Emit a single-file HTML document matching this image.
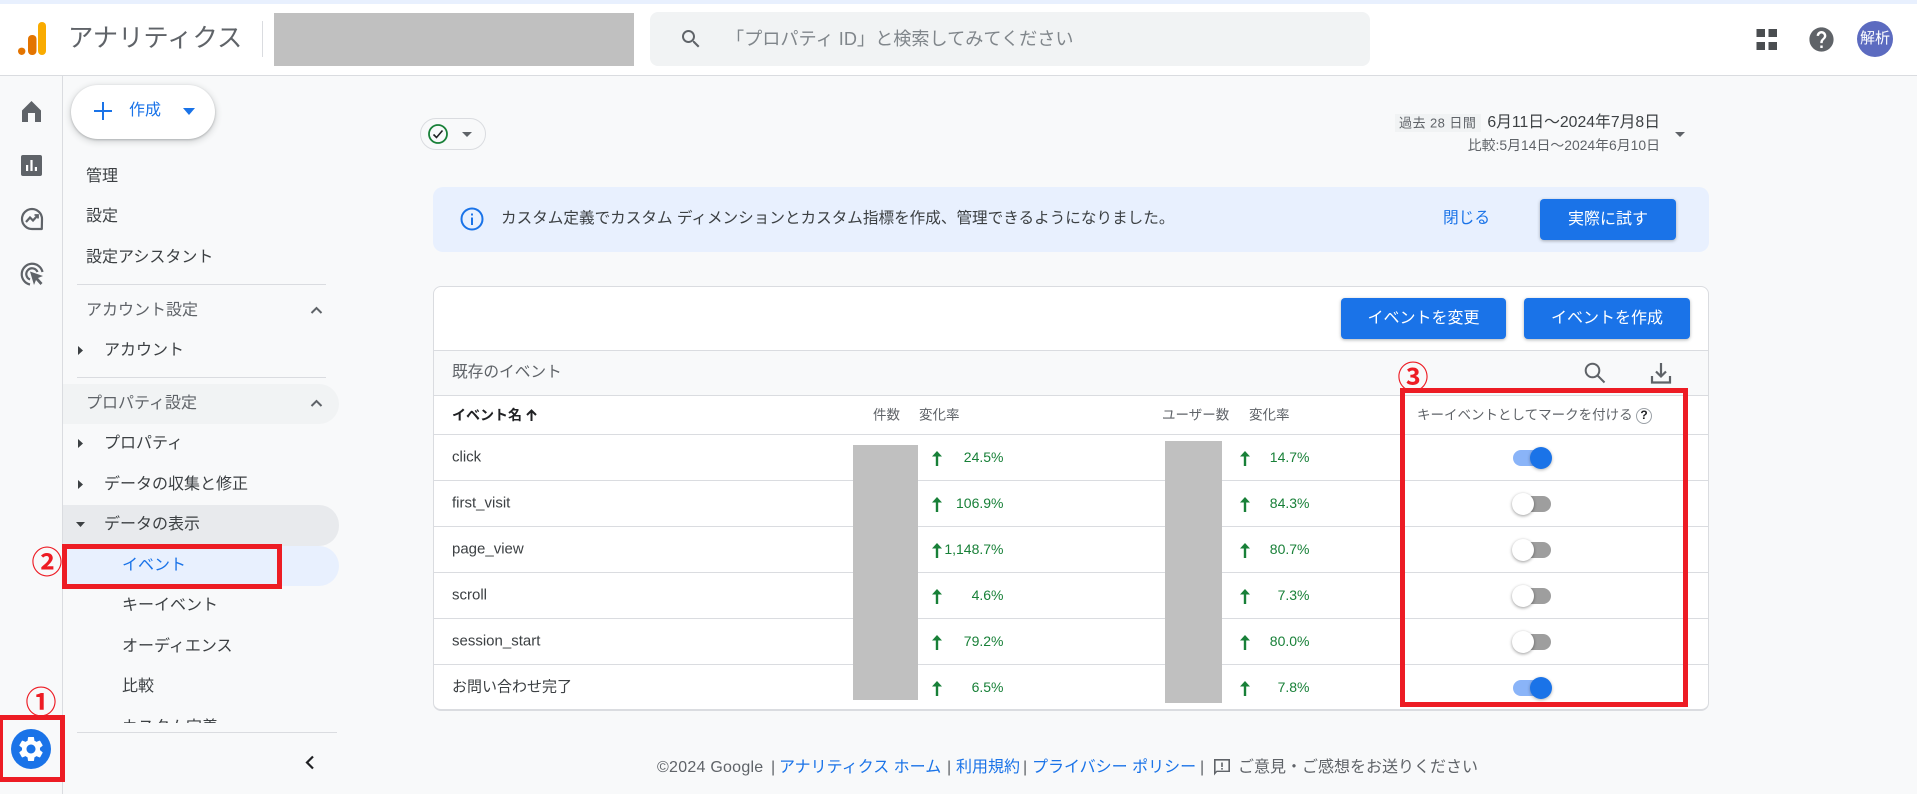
<!DOCTYPE html>
<html lang="ja"><head><meta charset="utf-8"><title>アナリティクス</title>
<style>
html,body{margin:0;padding:0;width:1917px;height:794px;overflow:hidden;background:#f8f9fa}
body{position:relative;font-family:"Liberation Sans","Noto Sans CJK JP",sans-serif;color:#3c4043}
.t{position:absolute;white-space:nowrap;line-height:1;transform:translateY(-50%);font-size:16px}
.b{position:absolute;box-sizing:border-box}
svg{position:absolute;display:block}
.g{color:#5f6368}.bl{color:#1a73e8}
.v{font-size:14px;color:#188038;right:913.5px}
.v2{font-size:14px;color:#188038;right:607.5px}
.row{font-size:15px;left:452px;color:#3c4043}
.l{position:absolute;left:434px;width:1274px;height:1px;background:#dadce0}
.btn{position:absolute;box-sizing:border-box;background:#1a73e8;color:#fff;border-radius:4px;font-size:16px;line-height:1;padding-bottom:0;display:flex;align-items:center;justify-content:center;box-shadow:0 1px 3px rgba(60,64,67,.4)}
.tr{position:absolute;width:38px;height:16px;border-radius:8px;left:1513px}
.th{position:absolute;width:22px;height:22px;border-radius:50%}
.on{background:#8ab4f8}.off{background:#9e9e9e}
.thon{background:#1a73e8;left:1530px;box-shadow:0 1px 3px rgba(0,0,0,.3)}
.thoff{background:#fff;left:1512px;box-shadow:0 1px 3px rgba(0,0,0,.4)}
.red{position:absolute;box-sizing:border-box;border:5px solid #ed1c24}
.num{position:absolute;color:#ed1c24;font-size:31px;font-weight:bold;line-height:1;transform:translate(-50%,-50%);font-family:"Noto Sans CJK JP",sans-serif}
</style></head><body>

<!-- top strip + header -->
<div class="b" style="left:0;top:0;width:1917px;height:4px;background:#e8f0fe"></div>
<div class="b" style="left:0;top:4px;width:1917px;height:72px;background:#fff;border-bottom:1px solid #dadce0"></div>

<svg style="left:18px;top:22px" width="28" height="33" viewBox="0 0 28 33">
<rect x="20" y="0" width="8" height="33" rx="4" fill="#f9ab00"/>
<rect x="10" y="13" width="8.500" height="20" rx="4" fill="#e37400"/>
<circle cx="3.700" cy="29.300" r="3.700" fill="#e37400"/></svg>
<div class="t g" style="left:68px;top:39px;font-size:25.300px">アナリティクス</div>
<div class="b" style="left:262px;top:21px;width:1px;height:36px;background:#dadce0"></div>
<div class="b" style="left:274px;top:13px;width:360px;height:53px;background:#c0c0c0"></div>
<div class="b" style="left:650px;top:12px;width:720px;height:54px;background:#f1f3f4;border-radius:8px"></div>
<svg style="left:679px;top:27px" width="24" height="24" viewBox="0 0 24 24"><path fill="#5f6368" d="M15.500 14h-.79l-.28-.27C15.410 12.590 16 11.110 16 9.500 16 5.910 13.090 3 9.500 3S3 5.910 3 9.500 5.910 16 9.500 16c1.610 0 3.090-.59 4.230-1.570l.27.28v.79l5 4.990L20.490 19l-4.990-5zm-6 0C7.010 14 5 11.990 5 9.500S7.010 5 9.500 5 14 7.010 14 9.500 11.990 14 9.500 14z"/></svg>
<div class="t" style="left:726px;top:39px;font-size:18.150px;color:#80868b">「プロパティ ID」と検索してみてください</div>

<svg style="left:1756px;top:29px" width="22" height="21" viewBox="0 0 22 21" fill="#4a4d50"><rect x=".5" width="8.500" height="8"/><rect x="12.500" width="8.500" height="8"/><rect x=".5" y="13" width="8.500" height="8"/><rect x="12.500" y="13" width="8.500" height="8"/></svg>
<svg style="left:1807px;top:24.500px" width="29" height="29" viewBox="0 0 24 24"><path fill="#5f6368" d="M12 2C6.480 2 2 6.480 2 12s4.480 10 10 10 10-4.480 10-10S17.520 2 12 2zm1 17h-2v-2h2v2zm2.070-7.750l-.9.92C13.450 12.900 13 13.500 13 15h-2v-.5c0-1.100.45-2.100 1.170-2.830l1.240-1.260c.37-.36.59-.86.59-1.410 0-1.100-.9-2-2-2s-2 .9-2 2H8c0-2.210 1.790-4 4-4s4 1.790 4 4c0 .88-.36 1.680-.93 2.250z"/></svg>
<div class="b" style="left:1857px;top:21px;width:36px;height:36px;border-radius:50%;background:#5c6bc0;color:#fff;font-size:15px;line-height:1;padding-bottom:2px;display:flex;align-items:center;justify-content:center">解析</div>

<!-- left rail -->
<div class="b" style="left:62px;top:76px;width:1px;height:718px;background:#dadce0"></div>
<svg style="left:22px;top:101px" width="19" height="21" viewBox="0 0 19 21"><path fill="#5f6368" d="M9.500 0L0 9.500V21h6v-9h7v9h6V9.500z"/></svg>
<svg style="left:21px;top:155px" width="21" height="21" viewBox="0 0 21 21"><rect width="21" height="21" rx="2" fill="#5f6368"/><path fill="#fff" d="M5 10h2.200v6H5zM9.400 5h2.200v11H9.400zM13.800 12h2.200v4h-2.200z"/></svg>
<svg style="left:20px;top:207px" width="24" height="24" viewBox="0 0 24 24" fill="none" stroke="#5f6368"><path d="M21.800 22H12A10 10 0 1 1 22 12z" stroke-width="2.200" stroke-linejoin="round"/><path d="M6 15l4-4.500 3 3L18 8" stroke-width="2.200"/><path d="M14.500 8H18v3.500" stroke-width="1.800"/></svg>
<svg style="left:20px;top:262px" width="24" height="24" viewBox="0 0 24 24" fill="none" stroke="#5f6368" stroke-width="2.200"><path d="M10 22.500A10.500 10.500 0 1 1 22.500 10"/><path d="M10 17.500A5.800 5.800 0 1 1 17.500 10"/><path fill="#5f6368" stroke="none" d="M10 9.500l13 4.500-5 2 4.500 5-2 2-4.500-5-2 5z"/></svg>

<!-- Create -->
<div class="b" style="left:71px;top:85px;width:144px;height:54px;border-radius:27px;background:#fff;box-shadow:0 2px 6px 2px rgba(60,64,67,.15),0 1px 2px rgba(60,64,67,.3)"></div>
<svg style="left:93px;top:101px" width="20" height="20" viewBox="0 0 20 20"><path fill="#1a73e8" d="M9 1h2v8h8v2h-8v8H9v-8H1V9h8z"/></svg>
<div class="t bl" style="left:129px;top:110.500px">作成</div>
<svg style="left:183px;top:108px" width="12" height="7" viewBox="0 0 12 7"><path fill="#1a73e8" d="M0 0h12L6 7z"/></svg>

<!-- nav -->
<div class="t" style="left:86px;top:177px">管理</div>
<div class="t" style="left:86px;top:217px">設定</div>
<div class="t" style="left:86px;top:258px">設定アシスタント</div>
<div class="b" style="left:77px;top:284px;width:249px;height:1px;background:#dadce0"></div>
<div class="t g" style="left:86px;top:311px">アカウント設定</div>
<svg style="left:310px;top:306px" width="13" height="8" viewBox="0 0 13 8" fill="none" stroke="#5f6368" stroke-width="2"><path d="M1.500 7l5-5 5 5"/></svg>
<svg style="left:78px;top:346px" width="5" height="9" viewBox="0 0 5 9"><path fill="#3c4043" d="M0 0l5 4.500L0 9z"/></svg>
<div class="t" style="left:104px;top:351px">アカウント</div>
<div class="b" style="left:77px;top:377px;width:249px;height:1px;background:#dadce0"></div>

<div class="b" style="left:63px;top:384px;width:276px;height:40px;background:#f1f3f4;border-radius:0 20px 20px 0"></div>
<div class="t g" style="left:86px;top:404px">プロパティ設定</div>
<svg style="left:310px;top:399px" width="13" height="8" viewBox="0 0 13 8" fill="none" stroke="#5f6368" stroke-width="2"><path d="M1.500 7l5-5 5 5"/></svg>
<svg style="left:78px;top:439px" width="5" height="9" viewBox="0 0 5 9"><path fill="#3c4043" d="M0 0l5 4.500L0 9z"/></svg>
<div class="t" style="left:104px;top:444px">プロパティ</div>
<svg style="left:78px;top:480px" width="5" height="9" viewBox="0 0 5 9"><path fill="#3c4043" d="M0 0l5 4.500L0 9z"/></svg>
<div class="t" style="left:104px;top:485px">データの収集と修正</div>
<div class="b" style="left:63px;top:505px;width:276px;height:41px;background:#e8eaed;border-radius:0 20px 20px 0"></div>
<svg style="left:76px;top:522px" width="9" height="5" viewBox="0 0 9 5"><path fill="#3c4043" d="M0 0h9L4.500 5z"/></svg>
<div class="t" style="left:104px;top:525px">データの表示</div>
<div class="b" style="left:63px;top:546px;width:276px;height:40px;background:#e8f0fe;border-radius:0 20px 20px 0"></div>
<div class="t bl" style="left:122px;top:566px">イベント</div>
<div class="t" style="left:122px;top:606px">キーイベント</div>
<div class="t" style="left:122px;top:647px">オーディエンス</div>
<div class="t" style="left:122px;top:687px">比較</div>
<div class="b" style="left:63px;top:712px;width:270px;height:11px;overflow:hidden"><div class="t" style="left:59px;top:16px">カスタム定義</div></div>
<div class="b" style="left:77px;top:732px;width:260px;height:1px;background:#dadce0"></div>
<svg style="left:305px;top:755px" width="10" height="15" viewBox="0 0 10 15" fill="none" stroke="#202124" stroke-width="2.200"><path d="M8 1.500L2 7.500l6 6"/></svg>
<div class="b" style="left:11px;top:729px;width:40px;height:40px;border-radius:50%;background:#1a73e8"></div>
<svg style="left:16px;top:734px" width="30" height="30" viewBox="0 0 24 24"><path fill="#fff" d="M19.140 12.940c.04-.3.06-.61.06-.94 0-.32-.02-.64-.07-.94l2.030-1.580c.18-.14.23-.41.12-.61l-1.920-3.320c-.12-.22-.37-.29-.59-.22l-2.390.96c-.5-.38-1.030-.7-1.620-.94l-.36-2.540c-.04-.24-.24-.41-.48-.41h-3.840c-.24 0-.43.17-.47.41l-.36 2.540c-.59.24-1.130.57-1.620.94l-2.390-.96c-.22-.08-.47 0-.59.22L2.740 8.870c-.12.21-.08.47.12.61l2.030 1.580c-.05.3-.09.63-.09.94s.02.64.07.94l-2.030 1.580c-.18.14-.23.41-.12.61l1.920 3.320c.12.22.37.29.59.22l2.390-.96c.5.38 1.030.7 1.620.94l.36 2.540c.05.24.24.41.48.41h3.840c.24 0 .44-.17.47-.41l.36-2.540c.59-.24 1.130-.56 1.620-.94l2.390.96c.22.08.47 0 .59-.22l1.920-3.320c.12-.22.07-.47-.12-.61l-2.010-1.580zM12 15.600c-1.980 0-3.600-1.620-3.600-3.600s1.620-3.600 3.600-3.600 3.600 1.620 3.600 3.600-1.620 3.600-3.600 3.600z"/></svg>

<!-- status pill -->
<div class="b" style="left:420px;top:118px;width:66px;height:32px;border:1px solid #dadce0;border-radius:16px"></div>
<svg style="left:428px;top:124px" width="20" height="20" viewBox="0 0 20 20" fill="none" stroke="#188038"><circle cx="10" cy="10" r="9" stroke-width="1.800"/><path d="M5.500 10.500l3 3L14.500 6.500" stroke="#202124" stroke-width="1.600"/></svg>
<svg style="left:462px;top:132px" width="10" height="5" viewBox="0 0 10 5"><path fill="#5f6368" d="M0 0h10L5 5z"/></svg>

<!-- date -->
<div class="b" style="left:1395px;top:114px;width:86px;height:18px;background:#f1f3f4"></div>
<div class="t" style="left:1399px;top:123px;font-size:13px;color:#5f6368;letter-spacing:.45px">過去 28 日間</div>
<div class="t" style="right:257px;top:122.500px;font-size:15.800px;color:#3c4043">6月11日〜2024年7月8日</div>
<div class="t g" style="right:257px;top:145.500px;font-size:13.900px">比較:5月14日〜2024年6月10日</div>
<svg style="left:1675px;top:132px" width="10" height="5" viewBox="0 0 10 5"><path fill="#5f6368" d="M0 0h10L5 5z"/></svg>

<!-- banner -->
<div class="b" style="left:433px;top:187px;width:1276px;height:65px;background:#e8f0fe;border-radius:10px"></div>
<svg style="left:460px;top:207px" width="24" height="24" viewBox="0 0 24 24"><circle cx="12" cy="12" r="10.500" fill="none" stroke="#1a73e8" stroke-width="2"/><path fill="#1a73e8" d="M11 10.500h2V18h-2zM11 6.500h2v2h-2z"/></svg>
<div class="t" style="left:501px;top:218.500px;font-size:15.600px">カスタム定義でカスタム ディメンションとカスタム指標を作成、管理できるようになりました。</div>
<div class="t bl" style="left:1443px;top:218.500px;font-size:15.700px">閉じる</div>
<div class="btn" style="left:1540px;top:199px;width:136px;height:41px">実際に試す</div>

<!-- card -->
<div class="b" style="left:433px;top:286px;width:1276px;height:425px;background:#fff;border:1px solid #dadce0;border-bottom:2px solid #dadce0;border-radius:8px"></div>
<div class="btn" style="left:1341px;top:298px;width:165px;height:41px">イベントを変更</div>
<div class="btn" style="left:1524px;top:298px;width:166px;height:41px">イベントを作成</div>
<div class="b" style="left:434px;top:351px;width:1274px;height:44px;background:#f8f9fa"></div>
<div class="l" style="top:350px"></div>
<div class="l" style="top:395px"></div>
<div class="t" style="left:452px;top:373px;font-size:15.700px;color:#5f6368">既存のイベント</div>
<svg style="left:1584px;top:362px" width="22" height="22" viewBox="0 0 22 22" fill="none" stroke="#5f6368" stroke-width="2"><circle cx="8.500" cy="8.500" r="6.800"/><path d="M13.500 13.500l7 7"/></svg>
<svg style="left:1650px;top:362px" width="22" height="22" viewBox="0 0 22 22" fill="none" stroke="#5f6368" stroke-width="2.200"><path d="M11 1v13M6 9.500l5 5 5-5M2 14v6.500h18V14"/></svg>

<!-- table head -->
<div class="t" style="left:452px;top:415px;font-size:14px;font-weight:bold;color:#202124">イベント名</div>
<svg style="left:526px;top:409px" width="11" height="12" viewBox="0 0 11 12" fill="none" stroke="#202124" stroke-width="2"><path d="M5.500 12V1.500M1 6l4.500-4.500L10 6"/></svg>
<div class="t g" style="left:873px;top:415px;font-size:13.500px">件数</div>
<div class="t g" style="left:919px;top:415px;font-size:13.500px">変化率</div>
<div class="t g" style="left:1162px;top:415px;font-size:13.500px">ユーザー数</div>
<div class="t g" style="left:1249px;top:415px;font-size:13.500px">変化率</div>
<div class="t g" style="left:1417px;top:415px;font-size:13.500px">キーイベントとしてマークを付ける</div>
<div class="b" style="left:1636px;top:408px;width:16px;height:16px;border:1.500px solid #9aa0a6;border-radius:50%;font-size:12px;font-weight:bold;color:#202124;text-align:center;line-height:13px">?</div>

<div class="l" style="top:434px"></div><div class="l" style="top:480px"></div><div class="l" style="top:526px"></div><div class="l" style="top:572px"></div><div class="l" style="top:618px"></div><div class="l" style="top:664px"></div>

<div class="t row" style="top:457px">click</div>
<div class="t row" style="top:503px">first_visit</div>
<div class="t row" style="top:549px">page_view</div>
<div class="t row" style="top:595px">scroll</div>
<div class="t row" style="top:641px">session_start</div>
<div class="t row" style="top:687px">お問い合わせ完了</div>

<div class="b" style="left:853px;top:445px;width:65px;height:255px;background:#c0c0c0"></div>
<div class="b" style="left:1165px;top:441px;width:57px;height:262px;background:#c0c0c0"></div>

<svg style="left:932px;top:451px" width="10" height="15" viewBox="0 0 10 15"><path fill="#188038" d="M5 0l5 5.500H6.200V15H3.800V5.500H0z"/></svg>
<svg style="left:932px;top:497px" width="10" height="15" viewBox="0 0 10 15"><path fill="#188038" d="M5 0l5 5.500H6.200V15H3.800V5.500H0z"/></svg>
<svg style="left:932px;top:543px" width="10" height="15" viewBox="0 0 10 15"><path fill="#188038" d="M5 0l5 5.500H6.200V15H3.800V5.500H0z"/></svg>
<svg style="left:932px;top:589px" width="10" height="15" viewBox="0 0 10 15"><path fill="#188038" d="M5 0l5 5.500H6.200V15H3.800V5.500H0z"/></svg>
<svg style="left:932px;top:635px" width="10" height="15" viewBox="0 0 10 15"><path fill="#188038" d="M5 0l5 5.500H6.200V15H3.800V5.500H0z"/></svg>
<svg style="left:932px;top:681px" width="10" height="15" viewBox="0 0 10 15"><path fill="#188038" d="M5 0l5 5.500H6.200V15H3.800V5.500H0z"/></svg>
<svg style="left:1240px;top:451px" width="10" height="15" viewBox="0 0 10 15"><path fill="#188038" d="M5 0l5 5.500H6.200V15H3.800V5.500H0z"/></svg>
<svg style="left:1240px;top:497px" width="10" height="15" viewBox="0 0 10 15"><path fill="#188038" d="M5 0l5 5.500H6.200V15H3.800V5.500H0z"/></svg>
<svg style="left:1240px;top:543px" width="10" height="15" viewBox="0 0 10 15"><path fill="#188038" d="M5 0l5 5.500H6.200V15H3.800V5.500H0z"/></svg>
<svg style="left:1240px;top:589px" width="10" height="15" viewBox="0 0 10 15"><path fill="#188038" d="M5 0l5 5.500H6.200V15H3.800V5.500H0z"/></svg>
<svg style="left:1240px;top:635px" width="10" height="15" viewBox="0 0 10 15"><path fill="#188038" d="M5 0l5 5.500H6.200V15H3.800V5.500H0z"/></svg>
<svg style="left:1240px;top:681px" width="10" height="15" viewBox="0 0 10 15"><path fill="#188038" d="M5 0l5 5.500H6.200V15H3.800V5.500H0z"/></svg>

<div class="t v" style="top:457px">24.5%</div>
<div class="t v" style="top:503px">106.9%</div>
<div class="t v" style="top:549px">1,148.7%</div>
<div class="t v" style="top:595px">4.6%</div>
<div class="t v" style="top:641px">79.2%</div>
<div class="t v" style="top:687px">6.5%</div>
<div class="t v2" style="top:457px">14.7%</div>
<div class="t v2" style="top:503px">84.3%</div>
<div class="t v2" style="top:549px">80.7%</div>
<div class="t v2" style="top:595px">7.3%</div>
<div class="t v2" style="top:641px">80.0%</div>
<div class="t v2" style="top:687px">7.8%</div>

<!-- toggles -->
<div class="tr on" style="top:450px"></div><div class="th thon" style="top:447px"></div>
<div class="tr off" style="top:496px"></div><div class="th thoff" style="top:493px"></div>
<div class="tr off" style="top:542px"></div><div class="th thoff" style="top:539px"></div>
<div class="tr off" style="top:588px"></div><div class="th thoff" style="top:585px"></div>
<div class="tr off" style="top:634px"></div><div class="th thoff" style="top:631px"></div>
<div class="tr on" style="top:680px"></div><div class="th thon" style="top:677px"></div>

<!-- footer -->
<div class="t g" style="left:657px;top:768px;letter-spacing:.25px">©2024 Google</div>
<div class="t g" style="left:771px;top:768px">|</div>
<div class="t bl" style="left:779px;top:768px">アナリティクス ホーム</div>
<div class="t g" style="left:947px;top:768px">|</div>
<div class="t bl" style="left:956px;top:768px">利用規約</div>
<div class="t g" style="left:1023px;top:768px">|</div>
<div class="t bl" style="left:1032px;top:768px">プライバシー ポリシー</div>
<div class="t g" style="left:1200px;top:768px">|</div>
<svg style="left:1213px;top:758px" width="18" height="18" viewBox="0 0 18 18"><path fill="#5f6368" d="M1 1h16v13H4l-3 3.500zM2.600 2.600v11l1-1h11.800v-10zM8.200 4.500h1.600v4.500H8.200zM8.200 10h1.600v1.600H8.200z"/></svg>
<div class="t g" style="left:1238px;top:768px">ご意見・ご感想をお送りください</div>

<!-- red annotations -->
<div class="red" style="left:62px;top:544px;width:220px;height:45px"></div>
<div class="red" style="left:0;top:715px;width:65px;height:67px;border-left-width:3px"></div>
<div class="red" style="left:1400px;top:388px;width:288px;height:319px"></div>
<div class="num" style="left:41px;top:699.500px">①</div>
<div class="num" style="left:47px;top:560px">②</div>
<div class="num" style="left:1413px;top:375px">③</div>
</body></html>
